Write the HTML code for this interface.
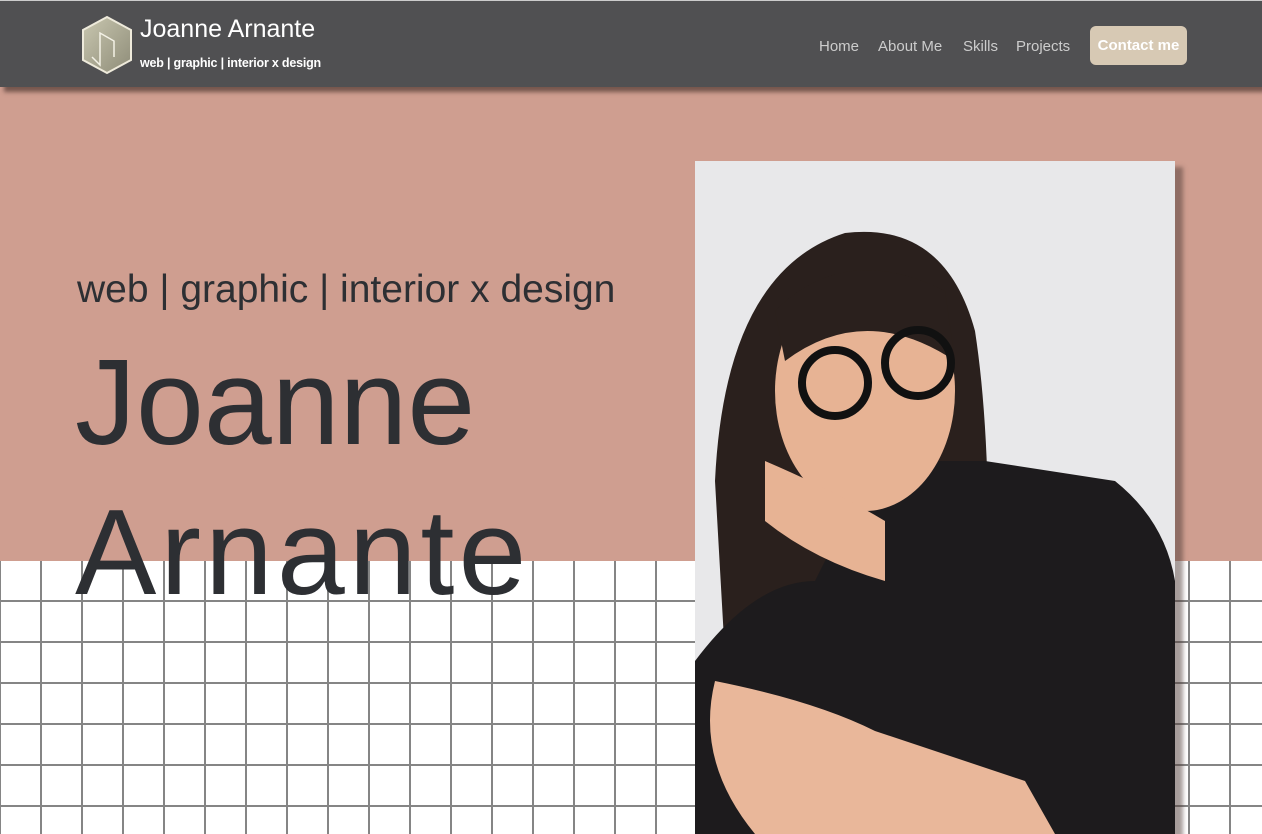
<!DOCTYPE html>
<html><head><style>
*{margin:0;padding:0;box-sizing:border-box}
body{width:1262px;height:834px;overflow:hidden;font-family:"Liberation Sans",sans-serif;background:#fff;position:relative}
.pink{position:absolute;left:0;top:0;width:1262px;height:561px;background:#cf9e90}
.grid{position:absolute;left:0;top:561px;width:1262px;height:273px;background-color:#fff;
background-image:linear-gradient(#858585 2px,transparent 2px),linear-gradient(90deg,#858585 2px,transparent 2px);
background-size:41px 41px;background-position:0 39px,40px 0}
header{position:absolute;left:0;top:0;width:1262px;height:87px;background:#505052;border-top:1px solid #ccc;box-shadow:4px 5px 4px rgba(60,40,35,.6)}
.name{position:absolute;left:140px;top:14px;color:#fff;font-size:25px}
.sub{position:absolute;left:140px;top:55px;color:#fff;font-size:12.5px;font-weight:bold;letter-spacing:-0.2px}
nav{position:absolute;top:37px;right:0;color:#ccc;font-size:15px}
nav span{position:absolute;white-space:nowrap}
.btn{position:absolute;left:1090px;top:25px;width:97px;height:39px;background:#d7c9b4;border-radius:6px;color:#fff;font-size:15px;font-weight:bold;text-align:center;line-height:39px}
.t1{position:absolute;left:77px;top:268px;font-size:39px;color:#2d2f33}
.t2{position:absolute;left:75px;top:327px;font-size:122px;line-height:150px;color:#2d2f33}
.photo{position:absolute;left:695px;top:161px;width:480px;height:673px;background:#e8e8ea;overflow:hidden;box-shadow:8px 6px 4px rgba(80,60,55,.5)}
</style></head><body>
<div class="pink"></div>
<div class="grid"></div>
<header>
<svg style="position:absolute;left:80px;top:14px" width="54" height="60" viewBox="0 0 54 60">
<defs><linearGradient id="g" x1="0" y1="0" x2="1" y2="1"><stop offset="0" stop-color="#c9c7b0"/><stop offset="1" stop-color="#8e8c78"/></linearGradient></defs>
<polygon points="27,2 51,15 51,45 27,58 3,45 3,15" fill="url(#g)" stroke="#eeeadb" stroke-width="2"/>
<path d="M12 42 L20 50 L20 18 L34 26 L34 42" fill="none" stroke="#f4f2e6" stroke-width="1.5"/>
</svg>
<div class="name">Joanne Arnante</div>
<div class="sub">web | graphic | interior x design</div>
<nav><span style="left:-443px">Home</span><span style="left:-384px">About Me</span><span style="left:-299px">Skills</span><span style="left:-246px">Projects</span></nav>
<div class="btn">Contact me</div>
</header>
<div class="t1">web | graphic | interior x design</div>
<div class="t2">Joanne<br><span style="letter-spacing:4px">Arnante</span></div>
<div class="photo">
<svg width="480" height="673" viewBox="0 0 480 673">
<path d="M40 673 L20 320 Q30 110 150 72 Q250 60 280 170 Q300 300 290 520 L300 673 Z" fill="#2a201d"/>
<path d="M180 300 L290 300 L420 320 Q470 360 480 420 L480 673 L0 673 L0 500 Q60 420 120 420 Z" fill="#1d1b1d"/>
<ellipse cx="170" cy="230" rx="90" ry="120" fill="#e7b394"/>
<path d="M80 150 Q150 80 250 130 L260 200 Q170 140 90 200 Z" fill="#2a201d"/>
<circle cx="140" cy="222" r="33" fill="none" stroke="#111" stroke-width="8"/>
<circle cx="223" cy="202" r="33" fill="none" stroke="#111" stroke-width="8"/>
<path d="M70 300 Q140 330 190 360 L190 420 Q120 400 70 360 Z" fill="#e7b394"/>
<path d="M20 520 Q120 540 180 570 L330 620 L360 673 L60 673 Q0 600 20 520 Z" fill="#e9b79a"/>
</svg>
</div>
</body></html>
